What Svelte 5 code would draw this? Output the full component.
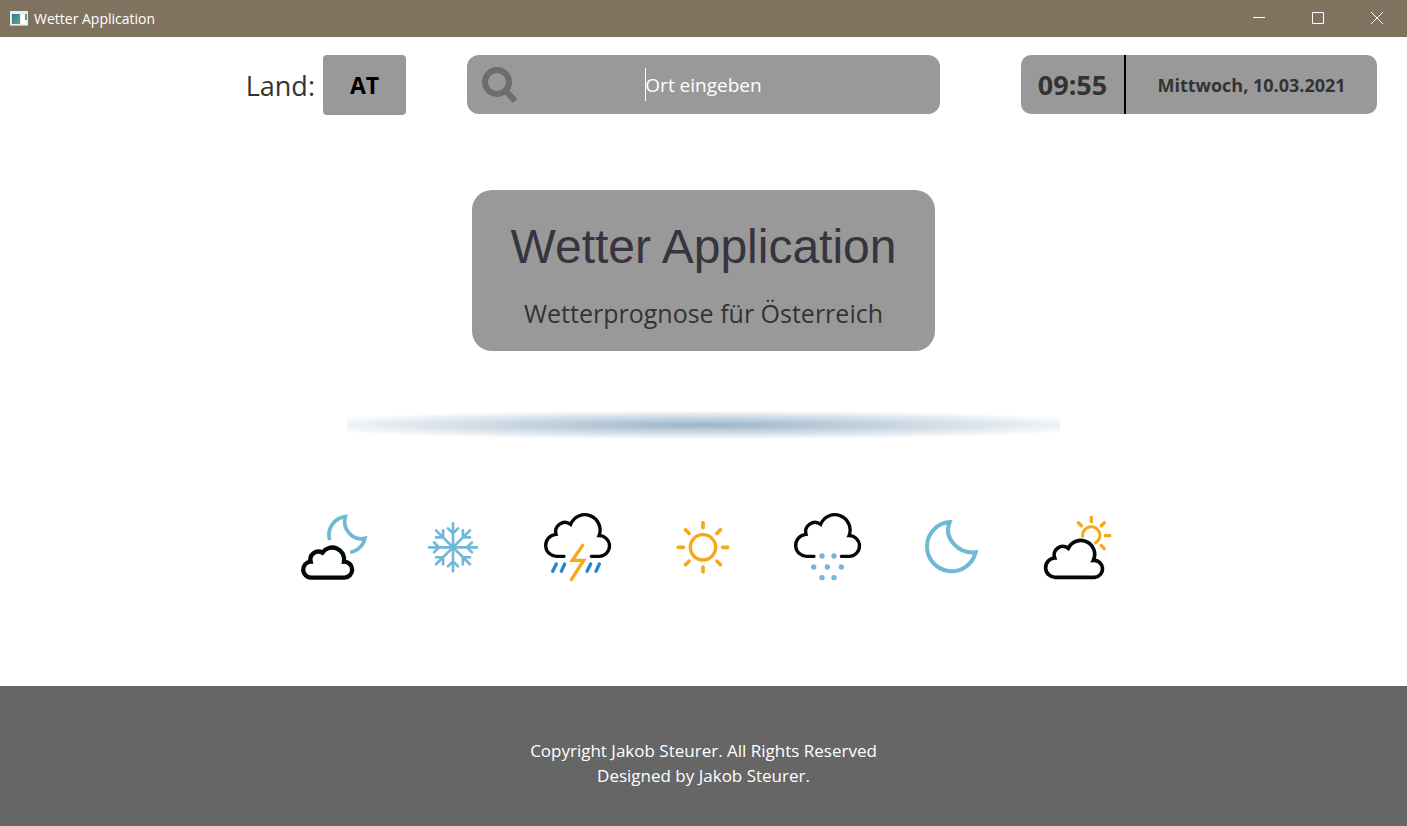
<script>
  let place = $state('');
  const country = 'AT';
  const time = '09:55';
  const date = 'Mittwoch, 10.03.2021';
  const turns = [0, 45, 90, 135, 180, 225, 270, 315];
  const smallSunTurns = [-45, 0, 45, 90, 135];
  const drops = [[79, 68], [104, 94], [182, 171], [208, 198]];
  const flakes = [[126, 168], [162, 168], [101, 201], [142, 201], [184, 201], [126, 233], [162, 233]];
  const largeCloud = 'M102 169H82A33 33 0 0 1 78 103A28 28 0 0 1 122 73A45 45 0 0 1 207 107A31 31 0 0 1 208 169H184';
</script>

<div class="window">
  <div class="titlebar">
    <svg class="app-icon" viewBox="0 0 18 15" aria-hidden="true">
      <defs>
        <linearGradient id="pane" x1="0" y1="0" x2="1" y2="1">
          <stop offset="0" stop-color="#3c6f92" />
          <stop offset="1" stop-color="#5cb184" />
        </linearGradient>
      </defs>
      <rect width="18" height="15" fill="#e9edf0" />
      <rect x="0" y="14" width="18" height="1" fill="#b9bec2" />
      <rect x="2" y="3" width="8" height="10" fill="url(#pane)" />
      <rect x="11" y="3" width="5" height="10" fill="#fff" />
      <rect x="15" y="3" width="2" height="6" fill="#5b9a90" />
    </svg>
    <span class="caption">Wetter Application</span>
    <div class="controls">
      <button aria-label="Minimieren"><svg viewBox="0 0 12 12"><path d="M0 5.5h12" /></svg></button>
      <button aria-label="Maximieren"><svg viewBox="0 0 12 12"><path d="M.5.5h11v11H.5z" /></svg></button>
      <button aria-label="Schließen"><svg viewBox="0 0 12 12"><path d="M0 0l12 12M12 0l-12 12" /></svg></button>
    </div>
  </div>

  <header>
    <div class="country">
      <label for="country">Land:</label>
      <button id="country">{country}</button>
    </div>
    <div class="search">
      <svg viewBox="0 0 36 36" aria-hidden="true">
        <circle cx="15" cy="15" r="12" />
        <path d="M23 23L33 34" />
      </svg>
      <input type="text" aria-label="Ort" placeholder="Ort eingeben" bind:value={place} />
      {#if !place}<span class="caret"></span>{/if}
    </div>
    <div class="clock">
      <time class="time">{time}</time>
      <time class="date">{date}</time>
    </div>
  </header>

  <main>
    <section class="card">
      <h1>Wetter Application</h1>
      <p>Wetterprognose für Österreich</p>
    </section>

    <div class="glow"></div>

    <div class="icons">
      <svg viewBox="-36 0 303 285" aria-hidden="true">
        <path class="ice" stroke-width="11" d="M119 120A55 55 0 0 1 166 50C156 85 186 124 225 115A55 55 0 0 1 181 157" />
        <path class="cloud" stroke-width="13" d="M65 233A24 24 0 0 1 62 185A24 24 0 0 1 97 158A36 36 0 0 1 162 185A23 23 0 1 1 163 233Z" />
      </svg>
      <svg viewBox="339 0 303 285" aria-hidden="true">
        {#each turns as turn}
          <path class="ice" stroke-width="8" stroke-linecap="round" transform="translate(489 142) rotate({turn})" d="M0 0V-72M-15 -57L0 -42L15 -57" />
        {/each}
      </svg>
      <svg viewBox="-6 0 303 285" aria-hidden="true">
        <path class="cloud" stroke-width="10" d={largeCloud} />
        {#each drops as [top, bottom]}
          <path class="rain" stroke-width="10" d="M{top} 192L{bottom} 214" />
        {/each}
        <path class="sun" stroke-width="10" d="M158 136L127 181H161L124 239" />
      </svg>
      <svg viewBox="369 0 303 285" aria-hidden="true">
        <circle class="sun" stroke-width="10" cx="519" cy="142" r="38" />
        {#each turns as turn}
          <path class="sun" stroke-width="11" transform="translate(519 142) rotate({turn})" d="M0 -59V-74" />
        {/each}
      </svg>
      <svg viewBox="-6 0 303 285" aria-hidden="true">
        <path class="cloud" stroke-width="10" d={largeCloud} />
        {#each flakes as [x, y]}
          <circle class="dot" cx={x} cy={y} r="8" />
        {/each}
      </svg>
      <svg viewBox="369 0 303 285" aria-hidden="true">
        <path class="ice" stroke-width="12" d="M509 66A74 74 0 1 0 587 157C540 162 488 118 509 66Z" />
      </svg>
      <svg viewBox="-6 0 303 285" aria-hidden="true">
        <path class="sun" stroke-width="9" stroke-linecap="butt" d="M158 109A26 26 0 1 1 196 129" />
        {#each smallSunTurns as turn}
          <path class="sun" stroke-width="10" transform="translate(184 107) rotate({turn})" d="M0 -42V-55" />
        {/each}
        <path class="cloud" stroke-width="11" d="M78 232A29 29 0 0 1 74 174A26 26 0 0 1 115 145A41 41 0 0 1 190 181A25.500 25.500 0 1 1 194 232Z" />
      </svg>
    </div>
  </main>

  <footer>
    <p>Copyright Jakob Steurer. All Rights Reserved</p>
    <p>Designed by Jakob Steurer.</p>
  </footer>
</div>

<style>
  .window {
    display: flex;
    flex-direction: column;
    min-height: 100vh;
    background: #fff;
    color: #333;
    font-family: "Open Sans", "Noto Sans", sans-serif;
  }
  button, input {
    font: inherit;
    border: 0;
    padding: 0;
  }
  p, h1 {
    margin: 0;
  }
  .titlebar {
    display: flex;
    align-items: center;
    height: 37px;
    padding-left: 10px;
    background: #7f735f;
    color: #fff;
  }
  .app-icon {
    width: 18px;
    height: 15px;
    margin-right: 6px;
  }
  .caption {
    font-size: 14px;
  }
  .controls {
    display: flex;
    height: 36px;
    margin-left: auto;
    align-self: flex-start;
  }
  .controls button {
    display: flex;
    align-items: center;
    justify-content: center;
    width: 59px;
    padding-right: 1px;
    background: none;
  }
  .controls svg {
    width: 12px;
    height: 12px;
    overflow: visible;
    fill: none;
    stroke: #fff;
    stroke-width: 1;
  }
  header {
    display: grid;
    grid-template-columns: 1fr 473px 1fr;
    align-items: start;
    padding-top: 18px;
  }
  .country {
    display: flex;
    align-items: center;
    justify-content: flex-end;
    gap: 8px;
    padding-right: 61px;
  }
  .country label {
    font-size: 27px;
  }
  .country button {
    width: 83px;
    height: 60px;
    border-radius: 4px;
    background: #999;
    color: #000;
    font-size: 23px;
    font-weight: 700;
  }
  .search {
    position: relative;
    display: flex;
    align-items: center;
    height: 59px;
    border-radius: 12px;
    background: #999;
  }
  .search svg {
    position: absolute;
    left: 15px;
    width: 36px;
    height: 36px;
    fill: none;
    stroke: #6d6d6d;
    stroke-width: 6;
    pointer-events: none;
  }
  .search input {
    width: 100%;
    height: 100%;
    border-radius: 12px;
    background: none;
    color: #fff;
    font-size: 19px;
    text-align: center;
    outline: none;
  }
  .search input::placeholder {
    color: #fff;
    opacity: 1;
  }
  .caret {
    position: absolute;
    left: calc(50% - 59px);
    width: 1px;
    height: 33px;
    background: #fff;
  }
  .clock {
    display: flex;
    justify-self: end;
    width: 356px;
    height: 59px;
    margin-right: 30px;
    border-radius: 10px;
    background: #999;
    font-weight: 700;
  }
  .clock time {
    display: flex;
    align-items: center;
    justify-content: center;
  }
  .time {
    width: 103px;
    border-right: 2px solid #000;
    font-size: 27px;
  }
  .date {
    flex: 1;
    font-size: 18px;
  }
  main {
    display: flex;
    flex: 1;
    flex-direction: column;
    align-items: center;
    padding-top: 75px;
  }
  .card {
    box-sizing: border-box;
    width: 463px;
    padding: 29px 0 18px;
    border-radius: 20px;
    background: #999;
    text-align: center;
  }
  h1 {
    color: #37343f;
    font: 400 48px/56px "Liberation Sans", Arial, sans-serif;
  }
  .card p {
    margin-top: 18px;
    font-size: 25px;
    line-height: 40px;
  }
  .glow {
    width: 713px;
    height: 26px;
    margin-top: 61px;
    background: radial-gradient(421px 15px at center, #9ab4ca, #fff);
  }
  .icons {
    display: flex;
    gap: 24px;
    margin: 62px 0 40px;
  }
  .icons svg {
    width: 101px;
    height: 95px;
    fill: none;
  }
  .cloud {
    stroke: #050808;
    stroke-linecap: round;
  }
  .ice {
    stroke: #70b8d6;
  }
  .rain {
    stroke: #2985ca;
    stroke-linecap: round;
  }
  .sun {
    stroke: #f8a71b;
    stroke-linecap: round;
  }
  .dot {
    fill: #70b8d6;
  }
  footer {
    box-sizing: border-box;
    min-height: 140px;
    padding: 52px 0 36px;
    background: #666;
    color: #fff;
    font-size: 17px;
    line-height: 25px;
    text-align: center;
  }
</style>
